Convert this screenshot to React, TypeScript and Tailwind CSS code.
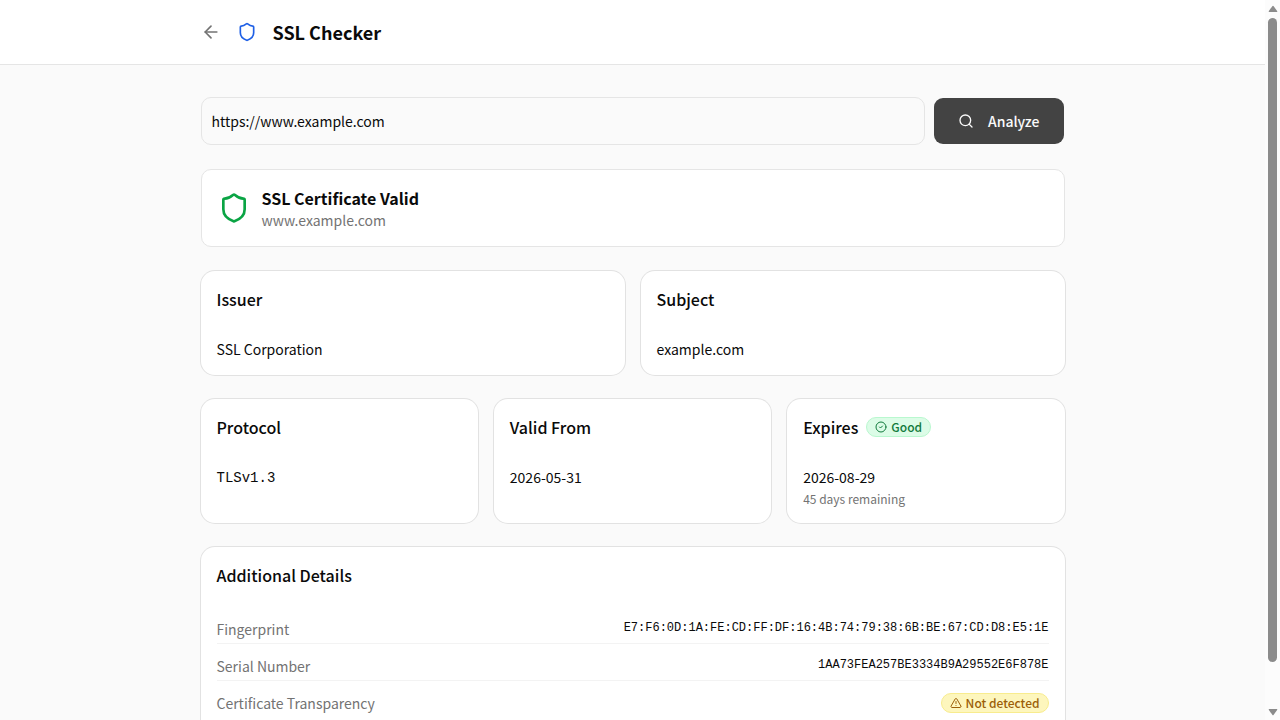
import type { ReactNode } from "react";
import { ArrowLeft, CircleCheck, Search, Shield, TriangleAlert } from "lucide-react";

function Card({ title, badge, children }: { title: string; badge?: ReactNode; children: ReactNode }) {
  return (
    <section className="rounded-[14px] bg-white p-4 ring-1 ring-[#e2e2e2]">
      <div className="mb-7 flex h-6 items-center gap-2">
        <h2 className="text-base font-medium">{title}</h2>
        {badge}
      </div>
      {children}
    </section>
  );
}

function GoodBadge() {
  return (
    <span className="inline-flex h-5 items-center gap-1 rounded-full border border-[#b9f8cf] bg-[#dcfce7] px-2 text-xs font-medium text-[#117a3c]">
      <CircleCheck className="size-3" aria-hidden="true" />
      Good
    </span>
  );
}

function WarningBadge({ children }: { children: ReactNode }) {
  return (
    <span className="inline-flex h-5 items-center gap-1 rounded-full border border-[#f8ec8e] bg-[#fdf6bd] px-2 text-xs font-medium text-[#9c5f08]">
      <TriangleAlert className="size-3" aria-hidden="true" />
      {children}
    </span>
  );
}

function DetailRow({ label, children }: { label: string; children: ReactNode }) {
  return (
    <div className="flex items-start justify-between border-b border-[#f3f3f3] py-1 last:border-b-0">
      <dt className="text-sm text-[#737373]">{label}</dt>
      <dd className="flex font-['Liberation_Mono',monospace] text-xs leading-[18px]">{children}</dd>
    </div>
  );
}

function ScrollTrack() {
  return (
    <div className="flex w-[15px] shrink-0 flex-col items-center bg-[#fcfcfc] pt-[5px] pb-1" aria-hidden="true">
      <svg className="h-2 w-[10px] shrink-0" viewBox="0 0 10 8" fill="#8b8b8b">
        <path d="M4.3 1.2Q5 .2 5.7 1.2L9.3 6.2Q9.6 7 8.8 7H1.2Q.4 7 .7 6.2Z" />
      </svg>
      <div className="mt-[5px] h-[90.6%] w-[9px] rounded-full bg-[#8b8b8b]" />
      <svg className="mt-auto h-2 w-[10px] shrink-0" viewBox="0 0 10 8" fill="#8b8b8b">
        <path d="M4.3 6.8Q5 7.8 5.7 6.8L9.3 1.8Q9.6 1 8.8 1H1.2Q.4 1 .7 1.8Z" />
      </svg>
    </div>
  );
}

export default function App() {
  return (
    <div className="flex h-screen bg-[#fafafa] font-['Noto_Sans_CJK_JP',sans-serif] text-[#0a0a0a]">
      <div className="min-w-0 flex-1 overflow-y-auto [scrollbar-width:none]">
        <header className="border-b border-[#e5e5e5] bg-white">
          <div className="mx-auto flex h-16 max-w-4xl items-center gap-4 px-4">
            <a href="#home" aria-label="Back" className="text-[#737373]">
              <ArrowLeft className="size-5" />
            </a>
            <Shield className="size-5 text-[#1f60e6]" aria-hidden="true" />
            <h1 className="text-lg font-semibold">SSL Checker</h1>
          </div>
        </header>
        <main className="mx-auto flex max-w-4xl flex-col gap-6 px-4 py-8">
          <form className="flex gap-2" onSubmit={(e) => e.preventDefault()}>
            <input
              type="url"
              aria-label="Website URL"
              defaultValue="https://www.example.com"
              className="h-12 min-w-0 flex-1 rounded-[10px] border border-[#e5e5e5] bg-transparent px-[10px] text-sm outline-none"
            />
            <button
              type="submit"
              className="flex h-12 items-center gap-[14px] rounded-[10px] border border-transparent bg-[#434343] bg-clip-padding px-6 text-sm font-medium text-[#fafafa]"
            >
              <Search className="size-4" aria-hidden="true" />
              Analyze
            </button>
          </form>
          <section className="flex items-center gap-3 rounded-[10px] border border-[#e5e5e5] bg-white p-4">
            <Shield className="size-8 text-[#0aa444]" aria-hidden="true" />
            <div>
              <h2 className="text-base font-semibold">SSL Certificate Valid</h2>
              <p className="text-sm text-[#737373]">www.example.com</p>
            </div>
          </section>
          <div className="grid grid-cols-2 gap-4">
            <Card title="Issuer">
              <p className="text-sm">SSL Corporation</p>
            </Card>
            <Card title="Subject">
              <p className="text-sm">example.com</p>
            </Card>
          </div>
          <div className="grid grid-cols-3 gap-4">
            <Card title="Protocol">
              <p className="font-['Liberation_Mono',monospace] text-sm leading-[22px]">TLSv1.3</p>
            </Card>
            <Card title="Valid From">
              <p className="text-sm">2026-05-31</p>
            </Card>
            <Card title="Expires" badge={<GoodBadge />}>
              <p className="text-sm">2026-08-29</p>
              <p className="mt-1 text-xs text-[#737373]">45 days remaining</p>
            </Card>
          </div>
          <Card title="Additional Details">
            <dl className="flex flex-col gap-2">
              <DetailRow label="Fingerprint">E7:F6:0D:1A:FE:CD:FF:DF:16:4B:74:79:38:6B:BE:67:CD:D8:E5:1E</DetailRow>
              <DetailRow label="Serial Number">1AA73FEA257BE3334B9A29552E6F878E</DetailRow>
              <DetailRow label="Certificate Transparency">
                <span className="flex font-['Noto_Sans_CJK_JP',sans-serif]">
                  <WarningBadge>Not detected</WarningBadge>
                </span>
              </DetailRow>
            </dl>
          </Card>
        </main>
      </div>
      <ScrollTrack />
    </div>
  );
}
